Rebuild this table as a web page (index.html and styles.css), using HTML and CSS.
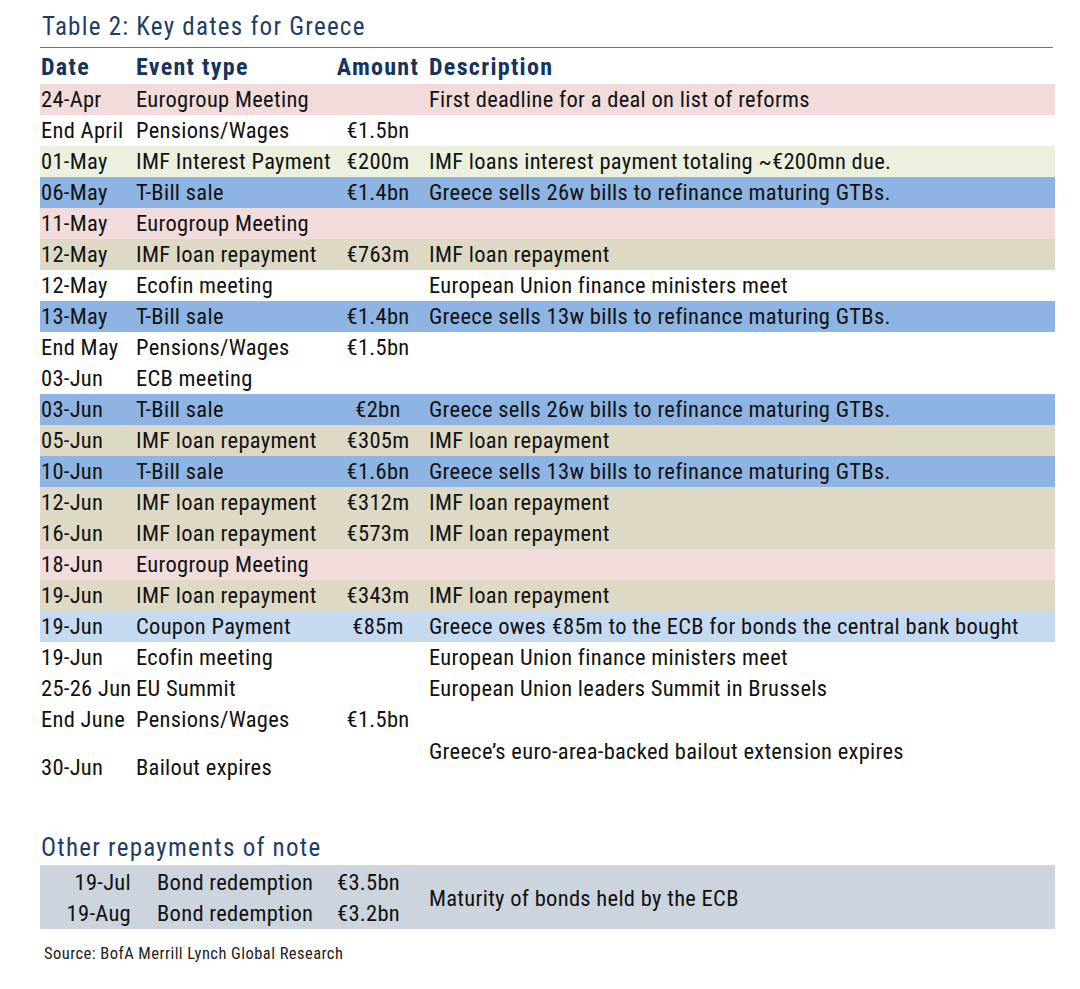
FILE: index.html
```html
<!DOCTYPE html>
<html lang="en">
<head>
<meta charset="utf-8">
<title>Table 2: Key dates for Greece</title>
<link rel="stylesheet" href="styles.css">
</head>
<body>
<div class="page">
  <h1 class="title">Table 2: Key dates for Greece</h1>

  <div class="table">
    <div class="row head">
      <div class="c-date">Date</div>
      <div class="c-event">Event type</div>
      <div class="c-amt">Amount</div>
      <div class="c-desc">Description</div>
    </div>

    <div class="row pink"><div class="c-date">24-Apr</div><div class="c-event">Eurogroup Meeting</div><div class="c-amt"></div><div class="c-desc">First deadline for a deal on list of reforms</div></div>
    <div class="row"><div class="c-date">End April</div><div class="c-event">Pensions/Wages</div><div class="c-amt">€1.5bn</div><div class="c-desc"></div></div>
    <div class="row green"><div class="c-date">01-May</div><div class="c-event">IMF Interest Payment</div><div class="c-amt">€200m</div><div class="c-desc">IMF loans interest payment totaling ~€200mn due.</div></div>
    <div class="row blue"><div class="c-date">06-May</div><div class="c-event">T-Bill sale</div><div class="c-amt">€1.4bn</div><div class="c-desc">Greece sells 26w bills to refinance maturing GTBs.</div></div>
    <div class="row pink"><div class="c-date">11-May</div><div class="c-event">Eurogroup Meeting</div><div class="c-amt"></div><div class="c-desc"></div></div>
    <div class="row khaki"><div class="c-date">12-May</div><div class="c-event">IMF loan repayment</div><div class="c-amt">€763m</div><div class="c-desc">IMF loan repayment</div></div>
    <div class="row"><div class="c-date">12-May</div><div class="c-event">Ecofin meeting</div><div class="c-amt"></div><div class="c-desc">European Union finance ministers meet</div></div>
    <div class="row blue"><div class="c-date">13-May</div><div class="c-event">T-Bill sale</div><div class="c-amt">€1.4bn</div><div class="c-desc">Greece sells 13w bills to refinance maturing GTBs.</div></div>
    <div class="row"><div class="c-date">End May</div><div class="c-event">Pensions/Wages</div><div class="c-amt">€1.5bn</div><div class="c-desc"></div></div>
    <div class="row"><div class="c-date">03-Jun</div><div class="c-event">ECB meeting</div><div class="c-amt"></div><div class="c-desc"></div></div>
    <div class="row blue"><div class="c-date">03-Jun</div><div class="c-event">T-Bill sale</div><div class="c-amt">€2bn</div><div class="c-desc">Greece sells 26w bills to refinance maturing GTBs.</div></div>
    <div class="row khaki"><div class="c-date">05-Jun</div><div class="c-event">IMF loan repayment</div><div class="c-amt">€305m</div><div class="c-desc">IMF loan repayment</div></div>
    <div class="row blue"><div class="c-date">10-Jun</div><div class="c-event">T-Bill sale</div><div class="c-amt">€1.6bn</div><div class="c-desc">Greece sells 13w bills to refinance maturing GTBs.</div></div>
    <div class="row khaki"><div class="c-date">12-Jun</div><div class="c-event">IMF loan repayment</div><div class="c-amt">€312m</div><div class="c-desc">IMF loan repayment</div></div>
    <div class="row khaki"><div class="c-date">16-Jun</div><div class="c-event">IMF loan repayment</div><div class="c-amt">€573m</div><div class="c-desc">IMF loan repayment</div></div>
    <div class="row pink"><div class="c-date">18-Jun</div><div class="c-event">Eurogroup Meeting</div><div class="c-amt"></div><div class="c-desc"></div></div>
    <div class="row khaki"><div class="c-date">19-Jun</div><div class="c-event">IMF loan repayment</div><div class="c-amt">€343m</div><div class="c-desc">IMF loan repayment</div></div>
    <div class="row lightblue"><div class="c-date">19-Jun</div><div class="c-event">Coupon Payment</div><div class="c-amt">€85m</div><div class="c-desc">Greece owes €85m to the ECB for bonds the central bank bought</div></div>
    <div class="row"><div class="c-date">19-Jun</div><div class="c-event">Ecofin meeting</div><div class="c-amt"></div><div class="c-desc">European Union finance ministers meet</div></div>
    <div class="row"><div class="c-date">25-26 Jun</div><div class="c-event">EU Summit</div><div class="c-amt"></div><div class="c-desc">European Union leaders Summit in Brussels</div></div>
    <div class="row"><div class="c-date">End June</div><div class="c-event">Pensions/Wages</div><div class="c-amt">€1.5bn</div><div class="c-desc"></div></div>
    <div class="row tall"><div class="c-date low">30-Jun</div><div class="c-event low">Bailout expires</div><div class="c-amt"></div><div class="c-desc high">Greece’s euro-area-backed bailout extension expires</div></div>
  </div>

  <h2 class="subtitle">Other repayments of note</h2>
  <div class="other">
    <div class="o-date">19-Jul</div><div class="o-event">Bond redemption</div><div class="o-amt">€3.5bn</div>
    <div class="o-desc">Maturity of bonds held by the ECB</div>
    <div class="o-date">19-Aug</div><div class="o-event">Bond redemption</div><div class="o-amt">€3.2bn</div>
  </div>

  <p class="source">Source: BofA Merrill Lynch Global Research</p>
</div>
</body>
</html>
```

FILE: styles.css
```css
html, body {
  margin: 0;
  padding: 0;
  background: #ffffff;
}

.page {
  padding-left: 40px;
  width: 1015px;
  font-family: "Roboto Condensed", "Liberation Sans", Arial, sans-serif;
  color: #111111;
}

.title {
  margin: 12px 0 0 0;
  width: 1011px;
  padding: 0 0 5px 2px;
  font-weight: normal;
  font-size: 25px;
  line-height: 30px;
  letter-spacing: 1.25px;
  color: #1c3d6c;
  border-bottom: 1px solid #5f7591;
}

.table {
  display: flex;
  flex-direction: column;
}

.row {
  display: grid;
  grid-template-columns: 96px 200px 84px 1fr;
  height: 31px;
  font-size: 22.5px;
  line-height: 31px;
  letter-spacing: 0.3px;
  white-space: nowrap;
}

.row.head {
  height: 36px;
  font-size: 24px;
  font-weight: bold;
  letter-spacing: 1.3px;
  color: #14345f;
}

.row.head > div {
  padding-top: 2px;
  line-height: 34px;
}

.c-date { padding-left: 1px; }
.c-amt { text-align: center; }
.c-desc { padding-left: 9px; }

.pink { background: #f2dcdb; }
.green { background: #ebf1de; }
.blue { background: #8db4e2; }
.khaki { background: #ddd9c4; }
.lightblue { background: #c5d9f1; }

.row.tall { height: 49px; }
.row.tall .low { padding-top: 17px; }
.row.tall .high { padding-top: 1px; }

.subtitle {
  margin: 49px 0 0 0;
  padding-left: 1px;
  font-weight: normal;
  font-size: 25px;
  line-height: 30px;
  letter-spacing: 1.25px;
  color: #1c3d6c;
}

.other {
  margin-top: 2px;
  padding: 2px 0 0 0;
  height: 62px;
  display: grid;
  grid-template-columns: 91px 206px 82px 1fr;
  grid-template-rows: 31px 31px;
  background: #ccd4de;
  font-size: 22.5px;
  line-height: 31px;
  letter-spacing: 0.3px;
  white-space: nowrap;
}

.o-date { text-align: right; }
.o-event { padding-left: 26px; }
.o-desc {
  grid-column: 4;
  grid-row: 1 / span 2;
  align-self: center;
  padding-left: 10px;
}

.source {
  margin: 15px 0 0 0;
  padding-left: 4px;
  font-size: 16.5px;
  line-height: 20px;
  letter-spacing: 0.45px;
  color: #222222;
}
```
